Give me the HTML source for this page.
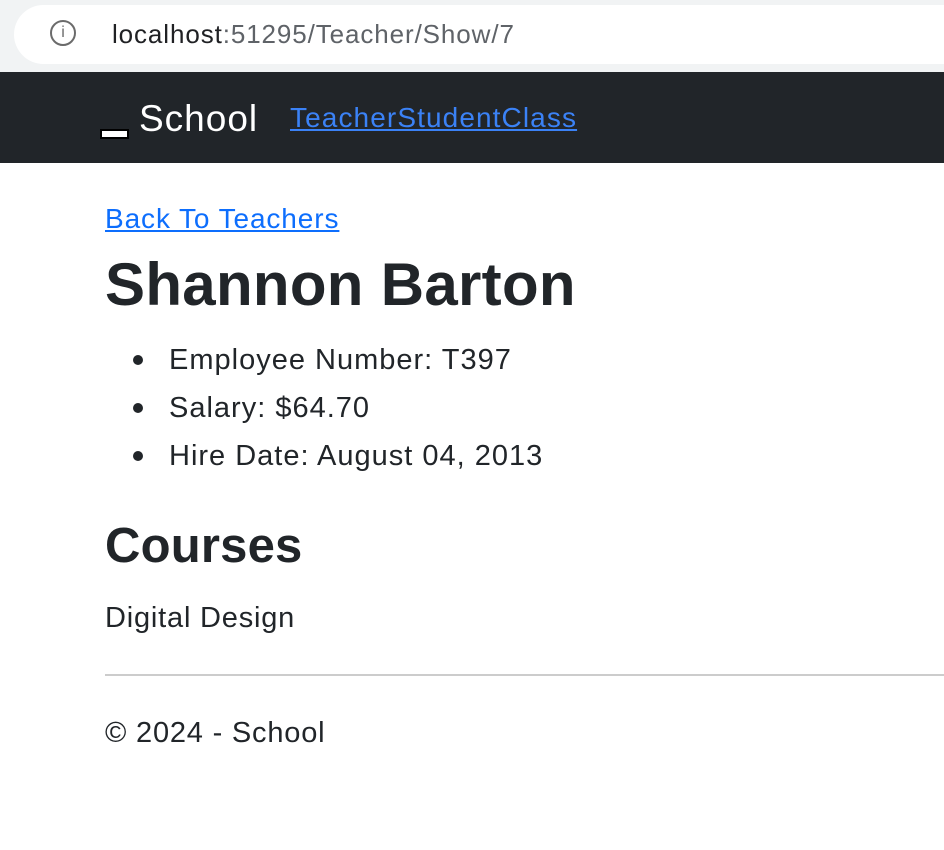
<!DOCTYPE html>
<html><head><style>
body{margin:0;width:944px;height:850px;background:#fff;font-family:"Liberation Sans",sans-serif;color:#212529;overflow:hidden;position:relative}
.top{position:absolute;left:0;top:0;width:944px;height:72px;background:#f1f3f4}
.pill{position:absolute;left:14px;top:5px;width:960px;height:59px;background:#fff;border-radius:30px}
.info{position:absolute;left:50px;top:20px;width:26px;height:26px;border:2px solid #6b6b6b;border-radius:50%;box-sizing:border-box;color:#6b6b6b;font-size:16px;text-align:center;line-height:22px}
.url{position:absolute;left:112px;top:19px;font-size:26px;color:#5f6368;letter-spacing:0.9px}
.url b{font-weight:normal;color:#202124}
.nav{position:absolute;left:0;top:72px;width:944px;height:91px;background:#212529}
.brand{position:absolute;left:139px;top:98px;font-size:37px;color:#fff;letter-spacing:1px}
.blk{position:absolute;left:100px;top:129px;width:29px;height:10px;background:#fff;border:2px solid #000;box-sizing:border-box}
a{color:#0d6efd;text-decoration:underline}
.navl{position:absolute;left:290px;top:102px;font-size:28px;color:#3b82f6;letter-spacing:1.1px}
.back{position:absolute;left:105px;top:203px;font-size:28px;letter-spacing:0.9px}
h1{position:absolute;left:105px;top:250px;margin:0;font-size:60px;font-weight:bold;letter-spacing:0.3px}
ul{position:absolute;left:105px;top:336px;margin:0;padding-left:64px;font-size:29px;line-height:48px;letter-spacing:1px;list-style:none}
li{position:relative}
li::before{content:"";position:absolute;left:-36px;top:19px;width:10px;height:10px;border-radius:50%;background:#212529}
h2{position:absolute;left:105px;top:518px;margin:0;font-size:49px;font-weight:bold;letter-spacing:0.2px}
.c{position:absolute;left:105px;top:602px;font-size:29px;letter-spacing:0.8px}
hr{position:absolute;left:105px;top:674px;width:850px;margin:0;border:0;border-top:2px solid #ccc}
.f{position:absolute;left:105px;top:717px;font-size:29px;letter-spacing:0.8px}
</style></head><body>
<div class="top"><div class="pill"></div><div class="info">i</div><div class="url"><b>localhost</b>:51295/Teacher/Show/7</div></div>
<div class="nav"></div>
<div class="blk"></div><div class="brand">School</div>
<a class="navl" href="#">TeacherStudentClass</a>
<a class="back" href="#">Back To Teachers</a>
<h1>Shannon Barton</h1>
<ul><li>Employee Number: T397</li><li>Salary: $64.70</li><li>Hire Date: August 04, 2013</li></ul>
<h2>Courses</h2>
<div class="c">Digital Design</div>
<hr>
<div class="f">© 2024 - School</div>
</body></html>
